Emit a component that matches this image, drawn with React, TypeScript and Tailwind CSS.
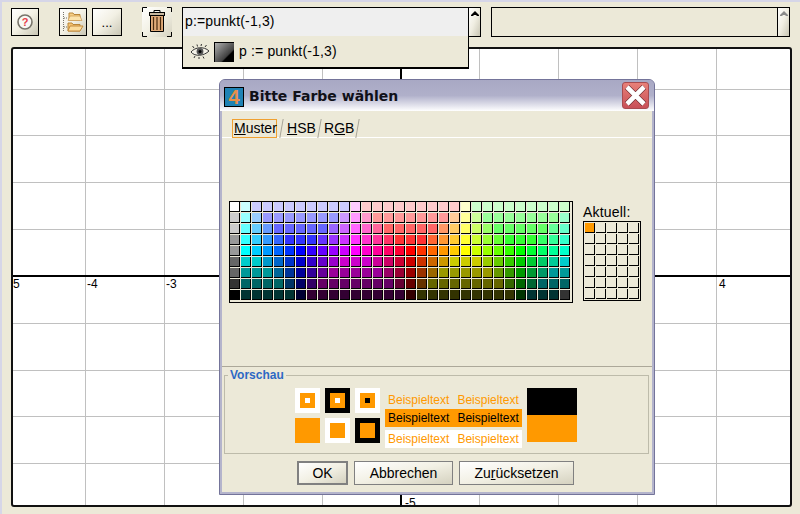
const palette = [
  'fff cff ccf*9 fcf fcc*9 ffc cfc*9',
  'ccc 9ff 9cf 99f*7 c9f f9f f9c f99*7 fc9 ff9 cf9 9f9*7 9fc',
  'ccc 6ff 6cf 69f 66f*5 96f c6f f6f f6c f69 f66*5 f96 fc6 ff6 cf6 9f6 6f6*5 6f9 6fc',
  '999 3ff 3cf 39f 36f 33f*3 63f 93f c3f f3f f3c f39 f36 f33*3 f63 f93 fc3 ff3 cf3 9f3 6f3 3f3*3 3f6 3f9 3fc',
  '999 0ff 0cf 09f 06f 03f 00f 30f 60f 90f c0f f0f f0c f09 f06 f03 f00 f30 f60 f90 fc0 ff0 cf0 9f0 6f0 3f0 0f0 0f3 0f6 0f9 0fc',
  '666 0cc 0cc 09c 06c 03c 00c 30c 60c 90c c0c c0c c0c c09 c06 c03 c00 c30 c60 c90 cc0 cc0 cc0 9c0 6c0 3c0 0c0 0c3 0c6 0c9 0cc',
  '666 099*3 069 039 009 309 609 909*5 906 903 900 930 960 990*5 690 390 090 093 096 099 099',
  '333 066*4 036 006 306 606*7 603 600 630 660*7 360 060 063 066*3',
  '000 033*5 003 303*9 300 330*9 030 033*3 333',
].flatMap(row =>
  row.split(' ').flatMap(item => {
    const [hex, n] = item.split('*')
    return Array(Number(n ?? 1)).fill(`#${hex}`)
  })
)

const gridX = [85, 164, 243, 322, 479, 558, 637, 716]
const gridY = [89, 135, 182, 229, 323, 370, 416, 463]
const axisLabels = [
  { x: 13, y: 288, t: '5' },
  { x: 87, y: 288, t: '-4' },
  { x: 166, y: 288, t: '-3' },
  { x: 719, y: 288, t: '4' },
  { x: 405, y: 507, t: '-5' },
]

function ScrollUp({ muted }: { muted?: boolean }) {
  return (
    <div className="w-[12px] h-full border-l border-black bg-gradient-to-br from-white via-[#f0eee2] to-[#c9c6b4] flex justify-center pt-[3px]">
      <svg width="8" height="6" viewBox="0 0 8 6">
        <path d="M4 0 8 4V5H5.5V4H2.5V5H0V4Z" fill={muted ? '#8a8a8a' : '#000'} />
      </svg>
    </div>
  )
}

function Preview({ outer, inner, dot }: { outer: string; inner?: boolean; dot?: string }) {
  return (
    <div className={`w-[25px] h-[25px] flex items-center justify-center ${outer}`}>
      {inner && (
        <div className="w-[15px] h-[15px] bg-[#ff9900] flex items-center justify-center">
          {dot && <div className={`w-[5px] h-[5px] ${dot}`} />}
        </div>
      )}
    </div>
  )
}

function Tab({ className, children }: { className: string; children: React.ReactNode }) {
  return (
    <div className={`relative h-[20px] flex items-center ${className}`}>
      {children}
      <span className="absolute right-0 top-px h-[19px] border-r border-[#a8a598] -skew-x-[10deg]" />
    </div>
  )
}

export default function App() {
  return (
    <div className="relative w-[800px] h-[514px] overflow-hidden bg-[#ece9d8] shadow-[inset_2px_2px_0_#d6d6e8] pl-[11px] pt-[7px] text-[14px] text-black font-['Liberation_Sans',Arial,sans-serif]">
      {/* Werkzeugleiste */}
      <div className="flex items-start h-[40px]">
        <button className="mt-px w-[28px] h-[28px] border border-black bg-gradient-to-br from-white via-[#f2f0e4] to-[#c9c6b4] flex items-center justify-center">
          <svg width="18" height="18" viewBox="0 0 18 18">
            <circle cx="9" cy="9" r="7" fill="#f8f8f4" stroke="#77736a" strokeWidth="1.6" />
            <text x="9" y="13" textAnchor="middle" fontSize="11" fontWeight="bold" fill="#e8404a">?</text>
          </svg>
        </button>
        <button className="mt-px ml-[20px] w-[28px] h-[28px] border border-black bg-gradient-to-br from-white via-[#f2f0e4] to-[#c9c6b4] flex items-center justify-center">
          <svg width="22" height="22" viewBox="0 0 22 22">
            <path d="M1.5 1V20M2 7H5M2 16H5" stroke="#77736a" strokeDasharray="1 1" fill="none" />
            <path d="M7 2H11L12 3.5H18V9H7Z" fill="#f5cf86" stroke="#b8863a" />
            <path d="M6 9.5H20L18 5H8Z" fill="#fbe3ac" stroke="#c48a3c" strokeWidth="0.6" />
            <path d="M6 12H10L11 13.5H18V20H6Z" fill="#f5c270" stroke="#b8863a" />
            <path d="M6 20 8 15H21L18 20Z" fill="#fbdc9c" stroke="#c48a3c" />
          </svg>
        </button>
        <button className="mt-px ml-[5px] w-[30px] h-[28px] border border-black bg-gradient-to-br from-white via-[#f2f0e4] to-[#c9c6b4] text-[13px] leading-[28px]">
          ...
        </button>
        <button className="ml-[20px] w-[30px] h-[30px] bg-gradient-to-br from-white via-[#f2f0e4] to-[#d5d2c0]">
          <svg width="30" height="30" viewBox="0 0 30 30" className="block">
            <path d="M.5 5V.5H5M25 .5H29.5V5M.5 25V29.5H5M25 29.5H29.5V25" fill="none" stroke="#000" />
            <path d="M12 5V3.5H18V5" fill="none" stroke="#000" />
            <rect x="7.5" y="5.5" width="15" height="3" fill="#c9b9a0" stroke="#000" />
            <path d="M8.5 8.5H21.5V24.5H8.5Z" fill="#e0aa78" stroke="#000" />
            <path d="M11.5 10V23M15 10V23M18.5 10V23" stroke="#4a2c10" strokeWidth="1.2" />
          </svg>
        </button>
        <div className="ml-[10px] w-[299px] h-[30px] border border-black bg-[#efefef] flex justify-between">
          <span className="pl-[2px] leading-[27px] tracking-[0.15px]">p:=punkt(-1,3)</span>
          <ScrollUp />
        </div>
        <div className="ml-[10px] w-[299px] h-[30px] border border-black bg-[#ece9d8] flex justify-end">
          <ScrollUp muted />
        </div>
      </div>

      {/* Zeichenfläche */}
      <div className="w-[781px] h-[460px] border-2 border-[#111] rounded-[3px] bg-white overflow-hidden">
        <svg width="777" height="456" viewBox="13 49 777 456" className="block">
          {gridX.map(x => (
            <line key={x} x1={x + 0.5} x2={x + 0.5} y1="49" y2="505" stroke="#c0c0c0" />
          ))}
          {gridY.map(y => (
            <line key={y} y1={y + 0.5} y2={y + 0.5} x1="13" x2="790" stroke="#c0c0c0" />
          ))}
          <line x1="13" x2="790" y1="276" y2="276" stroke="#000" strokeWidth="2" />
          <line x1="401" x2="401" y1="49" y2="505" stroke="#000" strokeWidth="2" />
          {axisLabels.map(l => (
            <text key={l.t} x={l.x} y={l.y} fontSize="12" fill="#000">{l.t}</text>
          ))}
        </svg>
      </div>

      {/* Aufklappliste */}
      <div className="absolute left-[182px] top-[36px] w-[287px] h-[33px] bg-[#ece9d8] border-l border-r border-black border-b-2 flex items-center">
        <svg width="20" height="16" viewBox="0 0 20 16" className="ml-[7px]">
          <path d="M1 8C5 3 14 2 19 7C14 12 5 13 1 8Z" fill="#f4f2e8" stroke="#333" />
          <circle cx="10" cy="7.5" r="3.4" fill="#555" />
          <circle cx="10" cy="7.5" r="1.5" fill="#000" />
          <path d="M4 4 2.5 2M7.5 2.5 7 .5M11 2 11.5 0M15 3 16.5 1M5 12 4 14M9 13V15M13 12.5 14 14.5" stroke="#333" />
        </svg>
        <div className="ml-[4px] w-[20px] h-[20px] bg-[linear-gradient(135deg,#b0b0b0,#404040_65%,#000_70%)] border-l border-t border-black" />
        <span className="ml-[5px] tracking-[0.15px]">p := punkt(-1,3)</span>
      </div>

      {/* Dialog */}
      <div className="absolute left-[219px] top-[79px] w-[436px] h-[416px] border border-[#74749a] rounded-t-[6px] bg-[#b4b4cc] flex flex-col">
        <div className="h-[31px] shrink-0 rounded-t-[5px] bg-gradient-to-b from-[#a8a8c4] via-[#b0b0ca] to-white flex items-center pl-[4px] pr-[5px]">
          <div className="mt-[2px] w-[20px] h-[20px] border border-black bg-[#1f82b4] flex items-center justify-center text-[20px] leading-none font-bold text-[#e8904a]">
            4
          </div>
          <span className="ml-[5px] mt-[2px] font-['DejaVu_Sans',sans-serif] font-bold text-[14px] text-[#101018]">
            Bitte Farbe wählen
          </span>
          <div className="ml-auto w-[27px] h-[27px] rounded-[3px] border border-[#a84c50] bg-gradient-to-b from-[#e88078] to-[#c85058] flex items-center justify-center">
            <svg width="23" height="23" viewBox="0 0 23 23">
              <path d="M3 3 20 20M20 3 3 20" stroke="#5a1a20" strokeWidth="6" />
              <path d="M3 3 20 20M20 3 3 20" stroke="#fff" strokeWidth="4.6" />
            </svg>
          </div>
        </div>

        <div className="mx-[2px] mb-[2px] flex-1 bg-[#ece9d8] flex flex-col">
          {/* Reiter */}
          <div className="h-[27px] shrink-0 pl-[5px] pt-[7px] flex border-b border-white">
            <Tab className="w-[55px]">
              <span className="ml-[5px] w-[45px] h-[19px] border border-[#f0a030] pl-[1px] leading-[17px]">
                <u>M</u>uster
              </span>
            </Tab>
            <Tab className="w-[38px] pl-[5px]">
              <span><u>H</u>SB</span>
            </Tab>
            <Tab className="w-[38px] pl-[4px]">
              <span>R<u>G</u>B</span>
            </Tab>
          </div>

          {/* Musterfelder */}
          <div className="h-[229px] shrink-0 border-b border-[#aca899] pl-[7px] pt-[63px] flex items-start">
            <div className="w-[344px] h-[102px] border border-black grid grid-cols-[repeat(31,10px)] auto-rows-[10px] gap-px content-start">
              {palette.map((c, i) => (
                <div key={i} className="border-r border-b border-black" style={{ backgroundColor: c }} />
              ))}
            </div>
            <div className="ml-[10px]">
              <div className="h-[20px] leading-[22px] tracking-[0.2px]">Aktuell:</div>
              <div className="w-[58px] h-[80px] border border-black p-px grid grid-cols-[repeat(5,10px)] auto-rows-[10px] gap-px content-start">
                {Array.from({ length: 35 }, (_, i) => (
                  <div key={i} className={`border-r border-b border-black ${i === 0 ? 'bg-[#ff9900]' : ''}`} />
                ))}
              </div>
            </div>
          </div>

          {/* Vorschau */}
          <div className="relative mt-[8px] ml-[2px] w-[425px] h-[79px] shrink-0 border border-[#bdbbaa] pl-[70px] pt-[12px] flex items-start">
            <span className="absolute left-[3px] -top-[8px] px-[2px] bg-[#ece9d8] font-bold text-[12px] leading-[14px] text-[#2c68c4]">
              Vorschau
            </span>
            <div className="grid grid-cols-[repeat(3,25px)] gap-[5px]">
              <Preview outer="bg-white" inner dot="bg-white" />
              <Preview outer="bg-black" inner dot="bg-white" />
              <Preview outer="bg-white" inner dot="bg-black" />
              <Preview outer="bg-[#ff9900]" />
              <Preview outer="bg-white" inner />
              <Preview outer="bg-black" inner />
            </div>
            <div className="ml-[5px] w-[137px] text-[12px] pt-[3px]">
              <div className="h-[18px] pl-[3px] flex gap-[8px] items-center text-[#ff9900]"><span>Beispieltext</span><span>Beispieltext</span></div>
              <div className="h-[18px] pl-[3px] flex gap-[8px] items-center bg-[#ff9900] text-black"><span>Beispieltext</span><span>Beispieltext</span></div>
              <div className="mt-[3px] h-[18px] pl-[3px] flex gap-[8px] items-center bg-white text-[#ff9900]"><span>Beispieltext</span><span>Beispieltext</span></div>
            </div>
            <div className="ml-[5px] w-[50px]">
              <div className="h-[27px] bg-black" />
              <div className="h-[27px] bg-[#ff9900]" />
            </div>
          </div>

          {/* Schaltflächen */}
          <div className="mt-[7px] pl-[75px] flex gap-[6px]">
            <button className="w-[51px] h-[24px] border-2 border-[#808080] bg-gradient-to-br from-white via-[#f2f0e4] to-[#d5d2c0] leading-[20px]">OK</button>
            <button className="w-[99px] h-[24px] border border-[#808080] bg-gradient-to-br from-white via-[#f2f0e4] to-[#d5d2c0] leading-[22px]">Abbrechen</button>
            <button className="w-[115px] h-[24px] border border-[#808080] bg-gradient-to-br from-white via-[#f2f0e4] to-[#d5d2c0] leading-[22px]">Zu<u>r</u>ücksetzen</button>
          </div>
        </div>
      </div>
    </div>
  )
}
